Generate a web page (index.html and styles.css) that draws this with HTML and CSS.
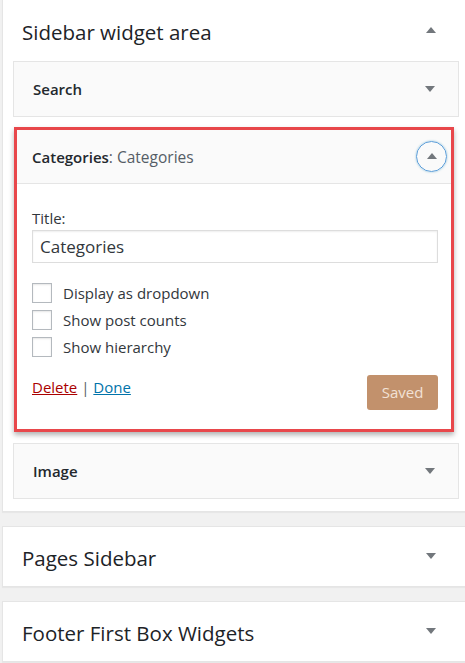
FILE: index.html
```html
<!DOCTYPE html>
<html>
<head>
<meta charset="utf-8">
<link rel="stylesheet" href="styles.css">
</head>
<body>
<div class="page">
  <section class="area">
    <div class="area-head">
      <h2>Sidebar widget area</h2>
      <svg class="caret" width="12" height="8" viewBox="0 0 12 8"><path d="M1 7 L6 1 L11 7 Z" fill="#72777c"/></svg>
    </div>
    <div class="widgets">
      <div class="widget">
        <div class="widget-top">
          <span class="w-title">Search</span>
          <svg class="caret" width="12" height="8" viewBox="0 0 12 8"><path d="M1 1 L11 1 L6 7 Z" fill="#72777c"/></svg>
        </div>
      </div>
      <div class="widget open">
        <div class="widget-top open-top">
          <span class="w-title">Categories<span class="in-title">: Categories</span></span>
          <span class="toggle"><svg width="12" height="8" viewBox="0 0 12 8"><path d="M1 7 L6 1 L11 7 Z" fill="#72777c"/></svg></span>
        </div>
        <div class="widget-inside">
          <label class="lbl">Title:</label>
          <div class="input">Categories</div>
          <div class="checks">
            <div class="check"><span class="box"></span><span>Display as dropdown</span></div>
            <div class="check"><span class="box"></span><span>Show post counts</span></div>
            <div class="check"><span class="box"></span><span>Show hierarchy</span></div>
          </div>
          <div class="actions">
            <div class="links"><a class="del">Delete</a> | <a class="done">Done</a></div>
            <span class="saved">Saved</span>
          </div>
        </div>
      </div>
      <div class="widget">
        <div class="widget-top">
          <span class="w-title">Image</span>
          <svg class="caret" width="12" height="8" viewBox="0 0 12 8"><path d="M1 1 L11 1 L6 7 Z" fill="#72777c"/></svg>
        </div>
      </div>
    </div>
  </section>
  <section class="area closed">
    <div class="area-head">
      <h2>Pages Sidebar</h2>
      <svg class="caret" width="12" height="8" viewBox="0 0 12 8"><path d="M1 1 L11 1 L6 7 Z" fill="#72777c"/></svg>
    </div>
  </section>
  <section class="area closed">
    <div class="area-head">
      <h2>Footer First Box Widgets</h2>
      <svg class="caret" width="12" height="8" viewBox="0 0 12 8"><path d="M1 1 L11 1 L6 7 Z" fill="#72777c"/></svg>
    </div>
  </section>
</div>
</body>
</html>
```
FILE: styles.css
```css
html, body {
  margin: 0;
  padding: 0;
  background: #f1f1f1;
  overflow: hidden;
}
body {
  font-family: "Open Sans", "Noto Sans", sans-serif;
  color: #23282d;
  width: 465px;
  height: 663px;
}
.page {
  display: flex;
  flex-direction: column;
  gap: 14px;
  margin-top: -1px;
  padding-left: 2px;
}
.area {
  width: 466px;
  background: #fff;
  border: 1px solid #e5e5e5;
  box-shadow: 0 1px 1px rgba(0,0,0,.04);
}
.area-head {
  display: flex;
  align-items: center;
  justify-content: space-between;
  height: 61px;
  padding: 2px 32px 0 19px;
  box-sizing: border-box;
}
.area-head h2 {
  margin: 0;
  font-size: 20.5px;
  font-weight: 400;
  color: #1d2327;
}
.area-head .caret { margin-top: -3px; }
.closed .area-head { height: 59px; }
.widgets {
  display: flex;
  flex-direction: column;
  gap: 10px;
  padding: 0 10px 12px 10px;
}
.widget {
  background: #fafafa;
  border: 1px solid #e5e5e5;
  width: 444px;
}
.widget-top {
  display: flex;
  align-items: center;
  justify-content: space-between;
  height: 54px;
  padding: 0 22px 0 19px;
}
.w-title {
  font-size: 15px;
  font-weight: 600;
  color: #23282d;
}
.in-title {
  font-weight: 400;
  font-size: 15.5px;
  color: #555d66;
}
.widget.open {
  width: 434px;
  margin-left: 1px;
  margin-bottom: 1px;
  border: 3px solid #e8474b;
  box-shadow: 0 3px 5px rgba(0,0,0,.3);
}
.open-top {
  height: 53px;
  border-bottom: 1px solid #e5e5e5;
  padding: 0 4px 0 15px;
}
.toggle {
  width: 29px;
  height: 29px;
  border: 1.5px solid #5b9dd9;
  border-radius: 50%;
  display: flex;
  align-items: center;
  justify-content: center;
  box-shadow: 0 0 2px rgba(30,140,190,.5);
}
.toggle svg { margin-top: -2px; }
.widget-inside {
  background: #fff;
  padding: 20px 13px 19px 15px;
}
.lbl {
  display: block;
  font-size: 15px;
  color: #32373c;
  line-height: 24px;
  margin-top: 2px;
}
.input {
  height: 31px;
  border: 1px solid #ddd;
  box-shadow: inset 0 1px 2px rgba(0,0,0,.07);
  font-size: 17px;
  line-height: 31px;
  padding-left: 7px;
  color: #32373c;
}
.checks {
  margin-top: 20px;
  display: flex;
  flex-direction: column;
  gap: 7px;
}
.check {
  display: flex;
  align-items: center;
  gap: 11px;
  font-size: 15px;
  color: #32373c;
  height: 20px;
}
.box {
  width: 18px;
  height: 18px;
  border: 1px solid #b4b9be;
  background: #fff;
  box-shadow: inset 0 1px 2px rgba(0,0,0,.1);
}
.actions {
  display: flex;
  justify-content: space-between;
  align-items: flex-start;
  margin-top: 19px;
}
.links {
  font-size: 15px;
  color: #555d66;
  margin-top: 1px;
}
.del { color: #a00; text-decoration: underline; }
.done { color: #0073aa; text-decoration: underline; }
.saved {
  display: inline-block;
  width: 71px;
  height: 35px;
  line-height: 35px;
  text-align: center;
  background: #c2916c;
  color: #f2e2d6;
  border-radius: 3px;
  font-size: 15px;
  margin-top: -1px;
}
```
